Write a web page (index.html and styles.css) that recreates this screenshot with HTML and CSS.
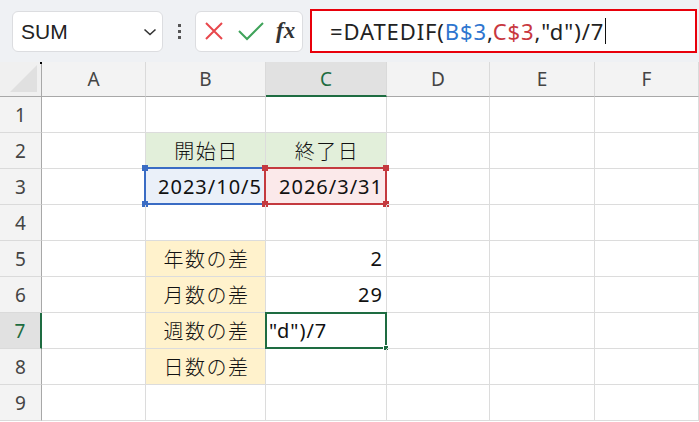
FILE: index.html
```html
<!DOCTYPE html>
<html lang="ja">
<head>
<meta charset="utf-8">
<link rel="stylesheet" href="styles.css">
</head>
<body>
<div class="toolbar">
  <div class="namebox">
    <span class="name">SUM</span>
    <svg class="chev" width="14" height="10" viewBox="0 0 14 10"><path d="M1.5 2.5 L7 7.5 L12.5 2.5" fill="none" stroke="#333" stroke-width="1.6"/></svg>
  </div>
  <div class="dots"><i></i><i></i><i></i></div>
  <div class="btns">
    <svg width="22" height="22" viewBox="0 0 22 22"><path d="M3 3 L19 19 M19 3 L3 19" stroke="#e8474c" stroke-width="2" fill="none"/></svg>
    <svg width="28" height="22" viewBox="0 0 28 22"><path d="M2 11 L10 19 L26 3" stroke="#3fa35a" stroke-width="2" fill="none"/></svg>
    <span class="fx">fx</span>
  </div>
  <div class="formula">
    <span class="ftext">=DATEDIF(<span class="rb">B$3</span>,<span class="rr">C$3</span>,"d")/7</span><span class="caret"></span>
  </div>
</div>
<div class="sheet">
  <div class="corner"><span class="tri"></span><span class="dot"></span></div>
  <div class="ch">A</div><div class="ch">B</div><div class="ch ch-sel">C</div><div class="ch">D</div><div class="ch">E</div><div class="ch">F</div>

  <div class="rh">1</div><div class="c"></div><div class="c"></div><div class="c"></div><div class="c"></div><div class="c"></div><div class="c"></div>

  <div class="rh">2</div><div class="c"></div><div class="c green ctr">開始日</div><div class="c green ctr">終了日</div><div class="c"></div><div class="c"></div><div class="c"></div>

  <div class="rh">3</div><div class="c"></div>
  <div class="c blue right num">2023/10/5<span class="ref ref-b"><i class="h tl"></i><i class="h tr"></i><i class="h bl"></i><i class="h br"></i></span></div>
  <div class="c pink right num">2026/3/31<span class="ref ref-r"><i class="h tl"></i><i class="h tr"></i><i class="h bl"></i><i class="h br"></i></span></div>
  <div class="c"></div><div class="c"></div><div class="c"></div>

  <div class="rh">4</div><div class="c"></div><div class="c"></div><div class="c"></div><div class="c"></div><div class="c"></div><div class="c"></div>

  <div class="rh">5</div><div class="c"></div><div class="c yellow ctr">年数の差</div><div class="c right num">2</div><div class="c"></div><div class="c"></div><div class="c"></div>

  <div class="rh">6</div><div class="c"></div><div class="c yellow ctr">月数の差</div><div class="c right num">29</div><div class="c"></div><div class="c"></div><div class="c"></div>

  <div class="rh rh-sel">7</div><div class="c"></div><div class="c yellow ctr">週数の差</div>
  <div class="c edit num">"d")/7<span class="active"><i class="fill"></i></span></div>
  <div class="c"></div><div class="c"></div><div class="c"></div>

  <div class="rh">8</div><div class="c"></div><div class="c yellow ctr">日数の差</div><div class="c"></div><div class="c"></div><div class="c"></div><div class="c"></div>

  <div class="rh">9</div><div class="c"></div><div class="c"></div><div class="c"></div><div class="c"></div><div class="c"></div><div class="c"></div>
</div>
</body>
</html>
```
FILE: styles.css
```css
* { box-sizing: border-box; }
html, body { margin: 0; padding: 0; }
body {
  width: 699px;
  height: 422px;
  overflow: hidden;
  background: #fff;
  font-family: "Noto Sans CJK JP", "Noto Sans", sans-serif;
  color: #222;
}
.toolbar {
  height: 62px;
  background: #eff1f4;
  display: flex;
  align-items: center;
  padding: 0 2px 0 12px;
}
.namebox {
  width: 151px;
  height: 41px;
  background: #fff;
  border: 1px solid #dcdde0;
  border-radius: 6px;
  display: flex;
  align-items: center;
  justify-content: space-between;
  padding: 0 5px 0 8px;
}
.name {
  font-family: "Liberation Sans", Arial, sans-serif;
  font-size: 21px;
  color: #222;
  margin-top: 2px;
}
.chev { margin-top: 1px; }
.dots {
  width: 32px;
  display: flex;
  flex-direction: column;
  align-items: center;
  gap: 3px;
}
.dots i {
  display: block;
  width: 3px;
  height: 3px;
  background: #555;
}
.btns {
  width: 108px;
  height: 41px;
  background: #fff;
  border: 1px solid #dcdde0;
  border-radius: 6px;
  display: flex;
  align-items: center;
  gap: 12px;
  padding-left: 7px;
}
.fx {
  font-family: "Liberation Serif", "Times New Roman", serif;
  font-style: italic;
  font-weight: bold;
  font-size: 23px;
  color: #333;
  margin-left: -1px;
}
.formula {
  margin-left: 7px;
  flex: 1;
  height: 44px;
  border: 2px solid #e8000b;
  background: #fff;
  display: flex;
  align-items: center;
  padding-left: 18px;
}
.ftext {
  font-family: "Noto Sans", "Liberation Sans", sans-serif;
  font-size: 22px;
  color: #222;
  letter-spacing: 0.9px;
}
.rb { color: #2e75cf; }
.rr { color: #c8383f; }
.caret {
  display: inline-block;
  width: 1px;
  height: 26px;
  background: #111;
  margin-left: 1px;
}
.sheet {
  display: grid;
  grid-template-columns: 42px 104px 120px 121px 103px 105px 104px;
  grid-template-rows: 35px repeat(9, 36px);
}
.corner {
  background: #f0f0f0;
  border-right: 1px solid #a8a8a8;
  border-bottom: 1px solid #a8a8a8;
  position: relative;
}
.corner .tri {
  position: absolute;
  right: 4px;
  bottom: 4px;
  width: 0;
  height: 0;
  border-left: 27px solid transparent;
  border-bottom: 27px solid #e0e0e0;
}
.corner .dot {
  position: absolute;
  right: -1px;
  top: 0;
  width: 2px;
  height: 2px;
  background: #000;
}
.ch {
  background: #f3f3f3;
  border-right: 1px solid #dadada;
  border-bottom: 1px solid #a8a8a8;
  display: flex;
  align-items: center;
  justify-content: center;
  font-family: "Noto Sans", "Liberation Sans", sans-serif;
  font-size: 19px;
  color: #444;
}
.ch-sel {
  background: #e1e1e1;
  border-bottom: 2px solid #1e6c41;
  color: #1e6c41;
}
.rh {
  background: #f3f3f3;
  border-right: 1px solid #a8a8a8;
  border-bottom: 1px solid #dadada;
  display: flex;
  align-items: center;
  justify-content: center;
  font-family: "Noto Sans", "Liberation Sans", sans-serif;
  font-size: 19px;
  color: #444;
}
.rh-sel {
  background: #e1e1e1;
  border-right: 2px solid #1e6c41;
  color: #1e6c41;
}
.c {
  position: relative;
  border-right: 1px solid #dcdcdc;
  border-bottom: 1px solid #dcdcdc;
  display: flex;
  align-items: center;
  font-size: 20px;
  font-weight: 300;
  letter-spacing: 1.5px;
  color: #111;
  padding: 0 4px;
}
.ctr { justify-content: center; padding-left: 6px; }
.num {
  font-family: "Noto Sans", "Liberation Sans", sans-serif;
  font-size: 20px;
  font-weight: 400;
  letter-spacing: 1px;
}
.right { justify-content: flex-end; padding-right: 3px; }
.green { background: #e2efda; }
.blue { background: #eaf0f9; }
.pink { background: #fbe9ea; }
.yellow { background: #fff2cc; }
.ref {
  position: absolute;
  left: -2px;
  top: -2px;
  right: -1px;
  bottom: -1px;
  border: 2px solid;
}
.ref-b { border-color: #3a6cc4; color: #3a6cc4; }
.ref-r { border-color: #c43a3f; color: #c43a3f; }
.ref .h {
  position: absolute;
  width: 6px;
  height: 6px;
  background: currentColor;
  border: 0;
}
.ref .tl { left: -4px; top: -4px; }
.ref .tr { right: -4px; top: -4px; }
.ref .bl { left: -4px; bottom: -4px; }
.ref .br { right: -4px; bottom: -4px; }
.edit { padding-left: 3px; }
.active {
  position: absolute;
  left: -1px;
  top: -1px;
  right: -1px;
  bottom: -1px;
  border: 2px solid #1e6c41;
}
.active .fill {
  position: absolute;
  right: -4px;
  bottom: -4px;
  width: 6px;
  height: 6px;
  background: #1e6c41;
  border: 1px solid #fff;
}
```
